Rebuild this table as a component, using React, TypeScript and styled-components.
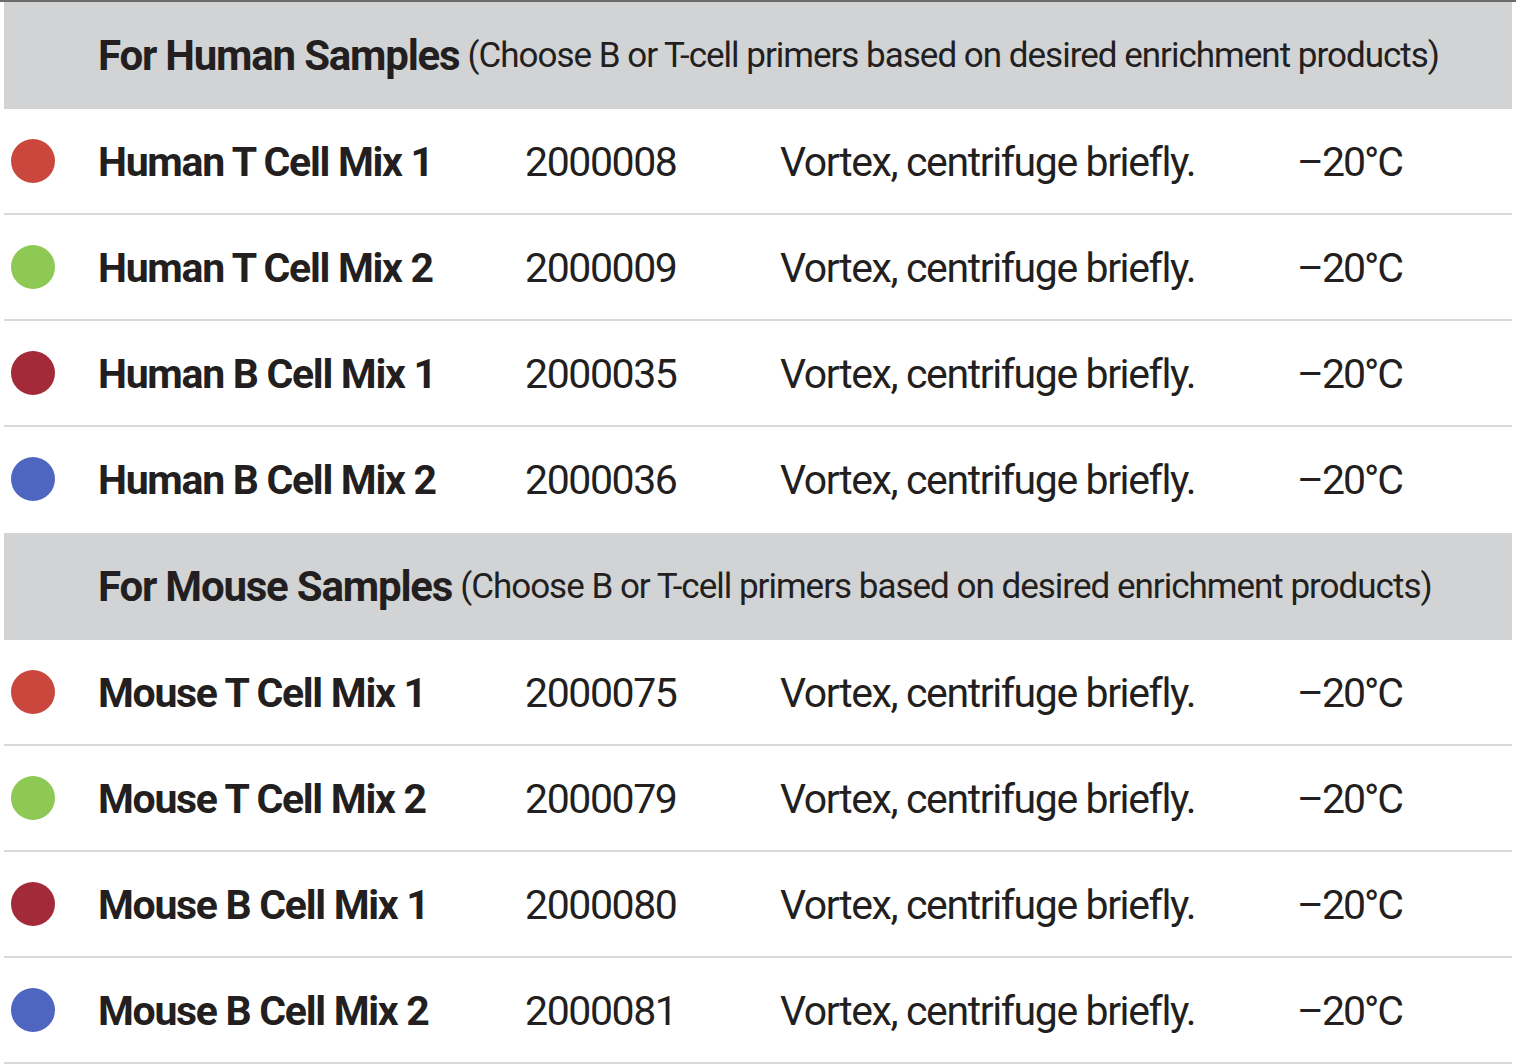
import React from "react";
import styled, { createGlobalStyle } from "styled-components";

const Global = createGlobalStyle`
  html, body { margin: 0; padding: 0; background: #ffffff; }
  body { font-family: Roboto, "Liberation Sans", sans-serif; color: #231f20; }
`;

const Page = styled.div`
  width: 1516px;
  border-top: 2px solid #6a6a6a;
`;

const Table = styled.div`
  padding: 0 4px;
`;

const SectionHeader = styled.div`
  height: 107px;
  background: #d1d3d4;
  display: flex;
  align-items: center;
  padding-left: 94px;
  white-space: nowrap;
`;

const HeaderTitle = styled.span`
  font-size: 42px;
  font-weight: 700;
  letter-spacing: -1.2px;
`;

const HeaderNote = styled.span`
  font-size: 35px;
  font-weight: 400;
  letter-spacing: -1px;
  margin-left: 8px;
`;

const Row = styled.div<{ $last?: boolean }>`
  height: 104px;
  display: grid;
  grid-template-columns: 94px 427px 255px 517px 1fr;
  align-items: center;
  border-bottom: 2px solid ${(p) => (p.$last ? "transparent" : "#d9d9d9")};
  white-space: nowrap;
`;

const DotCell = styled.div`
  display: flex;
  align-items: center;
  padding-left: 7px;
`;

const Dot = styled.span<{ $color: string }>`
  width: 44px;
  height: 44px;
  border-radius: 50%;
  background: ${(p) => p.$color};
  display: block;
`;

const Name = styled.div`
  font-size: 41px;
  font-weight: 700;
  letter-spacing: -1.3px;
  padding-top: 2px;
`;

const Cell = styled.div<{ $tight?: boolean }>`
  font-size: 41px;
  font-weight: 400;
  letter-spacing: ${(p) => (p.$tight ? "-2px" : "-1.4px")};
  padding-top: 2px;
`;

const RED = "#c9473c";
const GREEN = "#8fc955";
const DARKRED = "#a22a39";
const BLUE = "#4f66c1";

type Item = { color: string; name: string; code: string };

const human: Item[] = [
  { color: RED, name: "Human T Cell Mix 1", code: "2000008" },
  { color: GREEN, name: "Human T Cell Mix 2", code: "2000009" },
  { color: DARKRED, name: "Human B Cell Mix 1", code: "2000035" },
  { color: BLUE, name: "Human B Cell Mix 2", code: "2000036" },
];

const mouse: Item[] = [
  { color: RED, name: "Mouse T Cell Mix 1", code: "2000075" },
  { color: GREEN, name: "Mouse T Cell Mix 2", code: "2000079" },
  { color: DARKRED, name: "Mouse B Cell Mix 1", code: "2000080" },
  { color: BLUE, name: "Mouse B Cell Mix 2", code: "2000081" },
];

const Section = ({ title, items, lastBorder }: { title: string; items: Item[]; lastBorder: boolean }) => (
  <>
    <SectionHeader>
      <HeaderTitle>{title}</HeaderTitle>
      <HeaderNote>(Choose B or T-cell primers based on desired enrichment products)</HeaderNote>
    </SectionHeader>
    {items.map((it, i) => (
      <Row key={it.code} $last={i === items.length - 1 && !lastBorder}>
        <DotCell>
          <Dot $color={it.color} />
        </DotCell>
        <Name>{it.name}</Name>
        <Cell>{it.code}</Cell>
        <Cell>Vortex, centrifuge briefly.</Cell>
        <Cell $tight>–20°C</Cell>
      </Row>
    ))}
  </>
);

export default function App() {
  return (
    <Page>
      <Global />
      <Table>
        <Section title="For Human Samples" items={human} lastBorder={false} />
        <Section title="For Mouse Samples" items={mouse} lastBorder={true} />
      </Table>
    </Page>
  );
}
